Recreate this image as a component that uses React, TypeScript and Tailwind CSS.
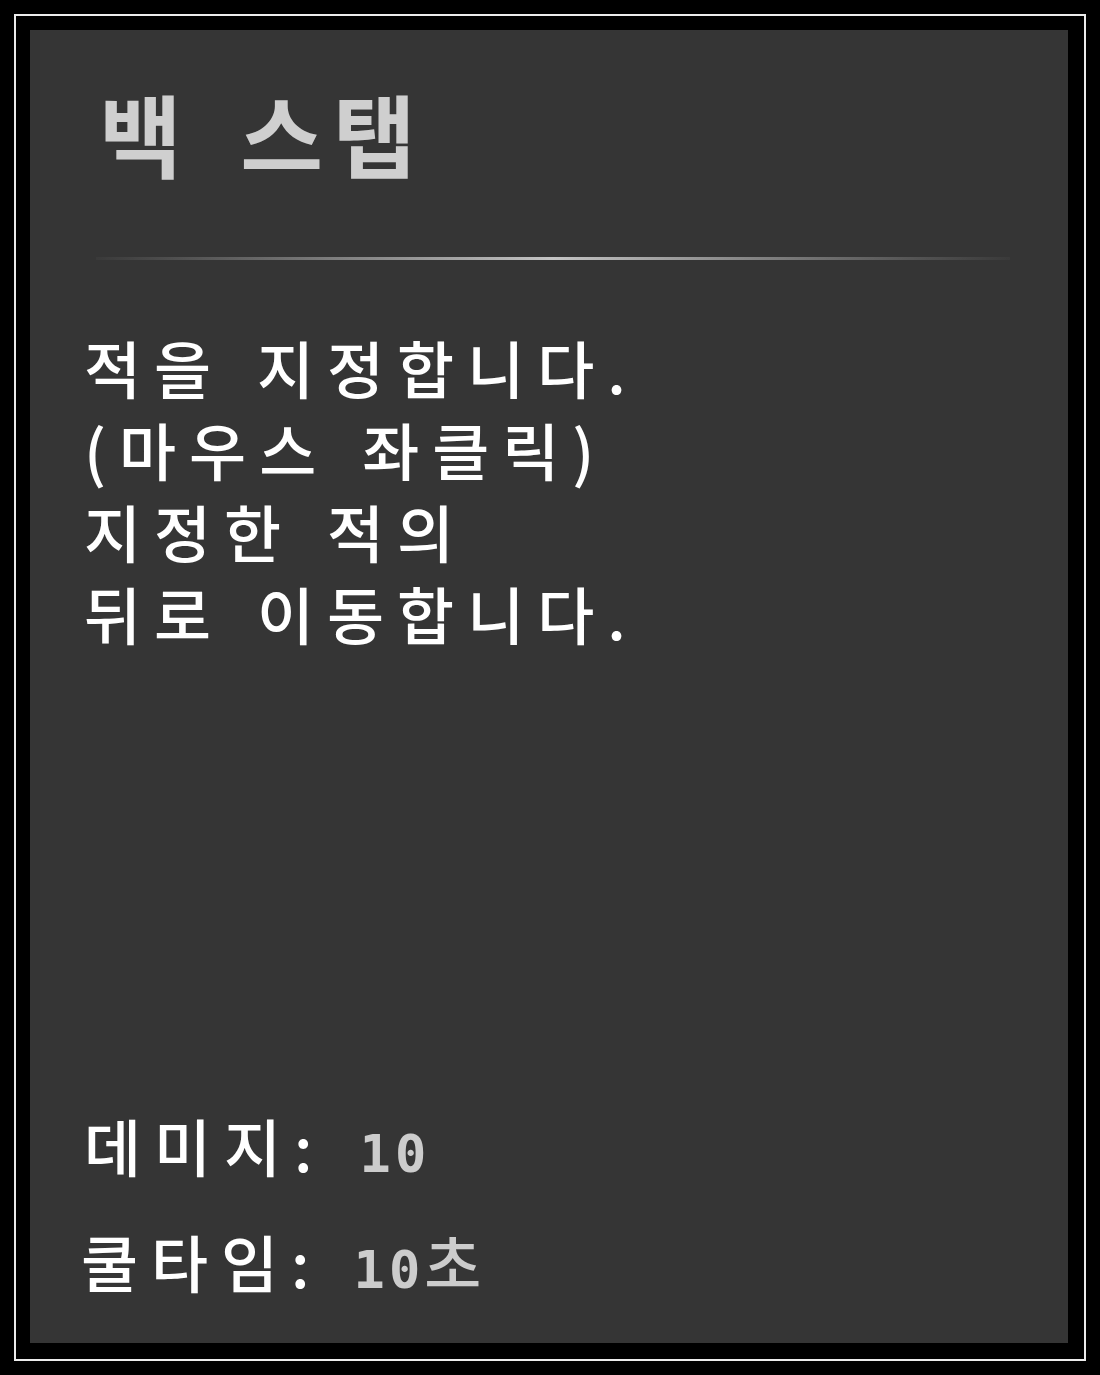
import React from 'react';

const font = "font-['Noto_Sans_CJK_KR','Noto_Sans',sans-serif]";

export default function App() {
  return (
    <div className={`w-[1100px] h-[1375px] bg-black pt-[14px] pl-[14px] pr-[14px] pb-[14px] ${font}`}>
      <div className="h-full border-2 border-[#ececec] pt-[14px] pl-[14px] pr-[16px] pb-[16px]">
        {/* skill tooltip panel */}
        <div className="h-full bg-[#353535] flex flex-col pl-[54px] pr-[58px]">
          <h1 className="mt-[52px] ml-[15px] text-[90px] leading-[100px] font-bold text-[#cfcfcf] tracking-[10px] [word-spacing:18px]">
            백 스탭
          </h1>

          <div className="mt-[75px] ml-[12px] h-[3px] bg-gradient-to-r from-[#3a3a3a] via-[#c4c4c4] to-[#3a3a3a]" />

          <div className="mt-[66px] text-[62px] leading-[82px] font-medium text-white tracking-[13px] [word-spacing:6px]">
            <p>적을 지정합니다.</p>
            <p>(마우스 좌클릭)</p>
            <p>지정한 적의</p>
            <p>뒤로 이동합니다.</p>
          </div>

          <div className="mt-auto mb-[31px] flex flex-col gap-[24px] text-[62px] leading-[83px] font-medium text-white tracking-[13px]">
            <p>
              데미지:
              <span className="ml-[34px] font-['DejaVu_Sans_Mono',monospace] font-bold text-[#cccccc] text-[52px] tracking-[4px]">10</span>
            </p>
            <p className="-ml-[3px]">
              쿨타임:
              <span className="ml-[31px] font-['DejaVu_Sans_Mono',monospace] font-bold text-[#cccccc] text-[52px] tracking-[4px]">10</span>
              <span className="text-[#cccccc]">초</span>
            </p>
          </div>
        </div>
      </div>
    </div>
  );
}
